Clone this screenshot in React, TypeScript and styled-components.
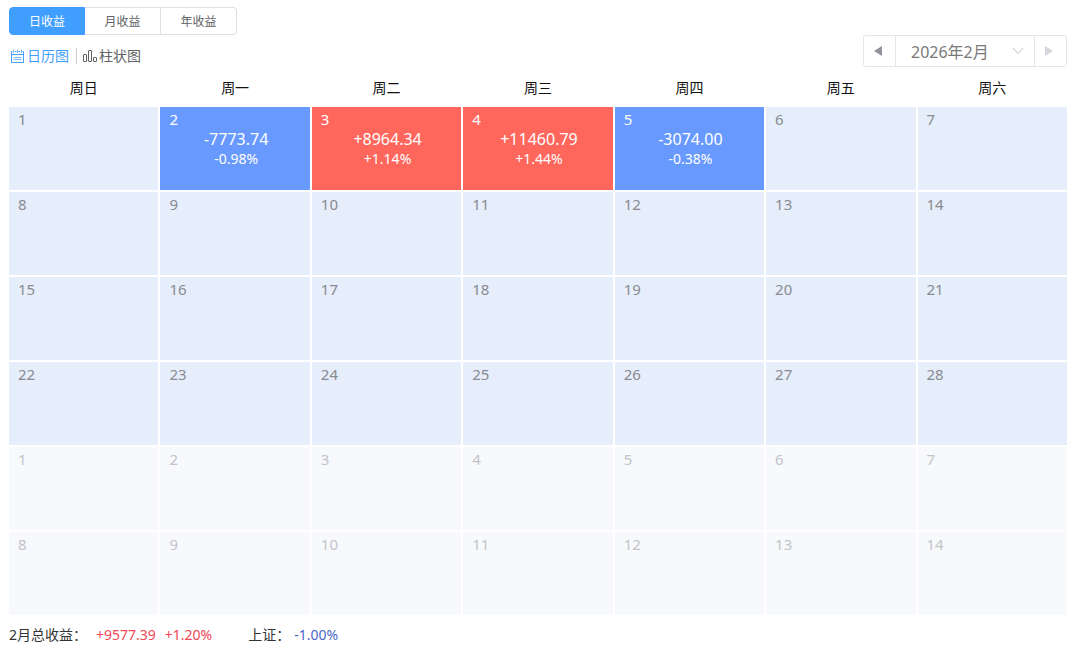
import React, { useState } from "react";
import styled, { createGlobalStyle, css } from "styled-components";

const GlobalStyle = createGlobalStyle`
  * { box-sizing: border-box; }
  body {
    margin: 0;
    background: #fff;
    color: #333;
    font-family: "Noto Sans", "Noto Sans CJK SC", sans-serif;
    font-size: 14px;
  }
  button, select { font-family: inherit; margin: 0; }
`;

const Page = styled.main`
  padding: 7px 13px 8px 9px;
`;

const Header = styled.header`
  display: flex;
  justify-content: space-between;
  align-items: flex-end;
`;

const Switches = styled.div`
  display: flex;
  flex-direction: column;
  gap: 10px;
`;

const PeriodTabs = styled.div`
  display: flex;
`;

const PeriodTab = styled.button<{ $active: boolean }>`
  width: 76px;
  height: 28px;
  padding: 1px 0 0;
  border: 1px solid ${(p) => (p.$active ? "#409eff" : "#dcdfe6")};
  border-left-width: ${(p) => (p.$active ? "1px" : "0")};
  background: ${(p) => (p.$active ? "#409eff" : "#fff")};
  color: ${(p) => (p.$active ? "#fff" : "#606266")};
  font-size: 12px;
  line-height: 16px;
  cursor: pointer;
  &:first-child { border-radius: 4px 0 0 4px; }
  &:last-child { border-radius: 0 4px 4px 0; }
`;

const ViewSwitch = styled.div`
  display: flex;
  align-items: center;
  height: 22px;
`;

const ViewButton = styled.button<{ $active: boolean }>`
  display: flex;
  align-items: center;
  gap: 2px;
  padding: 0;
  border: 0;
  background: none;
  color: ${(p) => (p.$active ? "#409eff" : "#606266")};
  font-size: 14px;
  line-height: 20px;
  cursor: pointer;
  svg { flex: none; }
`;

const Divider = styled.span`
  width: 1px;
  height: 16px;
  margin: 0 5px 0 7px;
  background: #ccc;
`;

const MonthPicker = styled.div`
  display: flex;
  height: 32px;
  border: 1px solid #e4e6eb;
  border-radius: 3px;
`;

const StepButton = styled.button`
  display: flex;
  align-items: center;
  justify-content: center;
  width: 31px;
  padding: 0 3px 0 0;
  border: 0;
  background: none;
  color: #909399;
  cursor: pointer;
  &:disabled { color: #d5d7dc; cursor: default; }
`;

const SelectWrap = styled.label`
  display: flex;
  align-items: center;
  width: 140px;
  padding-right: 10px;
  border: solid #e4e6eb;
  border-width: 0 1px;
`;

const MonthSelect = styled.select`
  flex: 1;
  min-width: 0;
  height: 30px;
  padding: 2px 0 0 15px;
  border: 0;
  outline: 0;
  appearance: none;
  background: none;
  color: #7a7a7a;
  font-size: 16px;
`;

const Calendar = styled.table`
  width: calc(100% + 4px);
  margin: 0 -2px;
  table-layout: fixed;
  border-collapse: separate;
  border-spacing: 2px;
`;

const Weekday = styled.th`
  height: 36px;
  padding: 2px 0 0;
  color: #111;
  font-size: 14px;
  font-weight: 400;
  line-height: 20px;
`;

type Tone = "plain" | "muted" | "gain" | "loss";

const tones = {
  plain: css`background: #e6edfb; color: #888b90;`,
  muted: css`background: #f7f9fd; color: #c3c4c6;`,
  gain: css`background: #ff665c; color: #fff;`,
  loss: css`background: #6899ff; color: #fff;`,
};

const Day = styled.td<{ $tone: Tone }>`
  height: 83px;
  padding: 2px 0 0;
  vertical-align: top;
  ${(p) => tones[p.$tone]}
`;

const DayNumber = styled.div`
  padding-left: 9px;
  font-size: 15px;
  line-height: 20px;
`;

const Amount = styled.div`
  padding-left: 2px;
  font-size: 16px;
  line-height: 20px;
  text-align: center;
`;

const Rate = styled.div`
  padding-left: 2px;
  font-size: 14px;
  line-height: 20px;
  text-align: center;
`;

const Summary = styled.footer`
  display: flex;
  gap: 36px;
  padding-top: 8px;
  line-height: 20px;
`;

const SummaryItem = styled.div<{ $gap: number }>`
  display: flex;
  gap: ${(p) => p.$gap}px;
`;

const Figure = styled.span<{ $up: boolean }>`
  color: ${(p) => (p.$up ? "#f04855" : "#4a67c8")};
`;

const CalendarIcon = () => (
  <svg width="16" height="16" viewBox="0 0 16 16" fill="none" stroke="currentColor" aria-hidden="true">
    <path d="M3.500 3.500H2.500V14.500H14.500V3.500H13.500M6 3.500H7.500M9.500 3.500H11M2.500 6.500H14.500" />
    <path d="M4.500 1.500V5M8.500 1.500V5M12.500 1.500V5" strokeOpacity="0.7" />
    <path d="M4.500 9.500H12.500M4.500 11.500H12.500" strokeOpacity="0.7" />
  </svg>
);

const BarsIcon = () => (
  <svg width="15" height="16" viewBox="0 0 15 16" fill="none" stroke="currentColor" aria-hidden="true">
    <rect x="1.500" y="6.500" width="3" height="7" rx="0.5" />
    <rect x="6.500" y="2.500" width="3" height="11" rx="0.5" />
    <rect x="11.500" y="9.500" width="3" height="4" rx="0.5" />
  </svg>
);

const weekdays = ["周日", "周一", "周二", "周三", "周四", "周五", "周六"];

const results: Record<number, { amount: string; rate: string }> = {
  2: { amount: "-7773.74", rate: "-0.98%" },
  3: { amount: "+8964.34", rate: "+1.14%" },
  4: { amount: "+11460.79", rate: "+1.44%" },
  5: { amount: "-3074.00", rate: "-0.38%" },
};

const DAYS_IN_MONTH = 28;

function DayCell({ index }: { index: number }) {
  if (index >= DAYS_IN_MONTH) {
    return (
      <Day $tone="muted">
        <DayNumber>{index - DAYS_IN_MONTH + 1}</DayNumber>
      </Day>
    );
  }
  const result = results[index + 1];
  const tone: Tone = !result ? "plain" : result.amount.startsWith("+") ? "gain" : "loss";
  return (
    <Day $tone={tone}>
      <DayNumber>{index + 1}</DayNumber>
      {result && (
        <>
          <Amount>{result.amount}</Amount>
          <Rate>{result.rate}</Rate>
        </>
      )}
    </Day>
  );
}

export default function App() {
  const [period, setPeriod] = useState("日收益");
  const [view, setView] = useState("日历图");

  return (
    <>
      <GlobalStyle />
      <Page>
        <Header>
          <Switches>
            <PeriodTabs>
              {["日收益", "月收益", "年收益"].map((name) => (
                <PeriodTab key={name} $active={name === period} onClick={() => setPeriod(name)}>
                  {name}
                </PeriodTab>
              ))}
            </PeriodTabs>
            <ViewSwitch>
              <ViewButton $active={view === "日历图"} onClick={() => setView("日历图")}>
                <CalendarIcon />
                日历图
              </ViewButton>
              <Divider />
              <ViewButton $active={view === "柱状图"} onClick={() => setView("柱状图")}>
                <BarsIcon />
                柱状图
              </ViewButton>
            </ViewSwitch>
          </Switches>
          <MonthPicker>
            <StepButton aria-label="上个月">
              <svg width="8" height="10" viewBox="0 0 8 10" fill="currentColor" aria-hidden="true">
                <path d="M8 0V10L0 5Z" />
              </svg>
            </StepButton>
            <SelectWrap>
              <MonthSelect aria-label="月份">
                <option>2026年2月</option>
              </MonthSelect>
              <svg width="12" height="8" viewBox="0 0 12 8" fill="none" stroke="#c0c4cc" aria-hidden="true">
                <path d="M1 1L6 6.500L11 1" />
              </svg>
            </SelectWrap>
            <StepButton aria-label="下个月" disabled>
              <svg width="8" height="10" viewBox="0 0 8 10" fill="currentColor" aria-hidden="true">
                <path d="M0 0V10L8 5Z" />
              </svg>
            </StepButton>
          </MonthPicker>
        </Header>
        <Calendar>
          <thead>
            <tr>
              {weekdays.map((name) => (
                <Weekday key={name} scope="col">{name}</Weekday>
              ))}
            </tr>
          </thead>
          <tbody>
            {[0, 1, 2, 3, 4, 5].map((week) => (
              <tr key={week}>
                {weekdays.map((name, day) => (
                  <DayCell key={name} index={week * 7 + day} />
                ))}
              </tr>
            ))}
          </tbody>
        </Calendar>
        <Summary>
          <SummaryItem $gap={9}>
            <span>2月总收益：</span>
            <Figure $up>+9577.39</Figure>
            <Figure $up>+1.20%</Figure>
          </SummaryItem>
          <SummaryItem $gap={4}>
            <span>上证：</span>
            <Figure $up={false}>-1.00%</Figure>
          </SummaryItem>
        </Summary>
      </Page>
    </>
  );
}
